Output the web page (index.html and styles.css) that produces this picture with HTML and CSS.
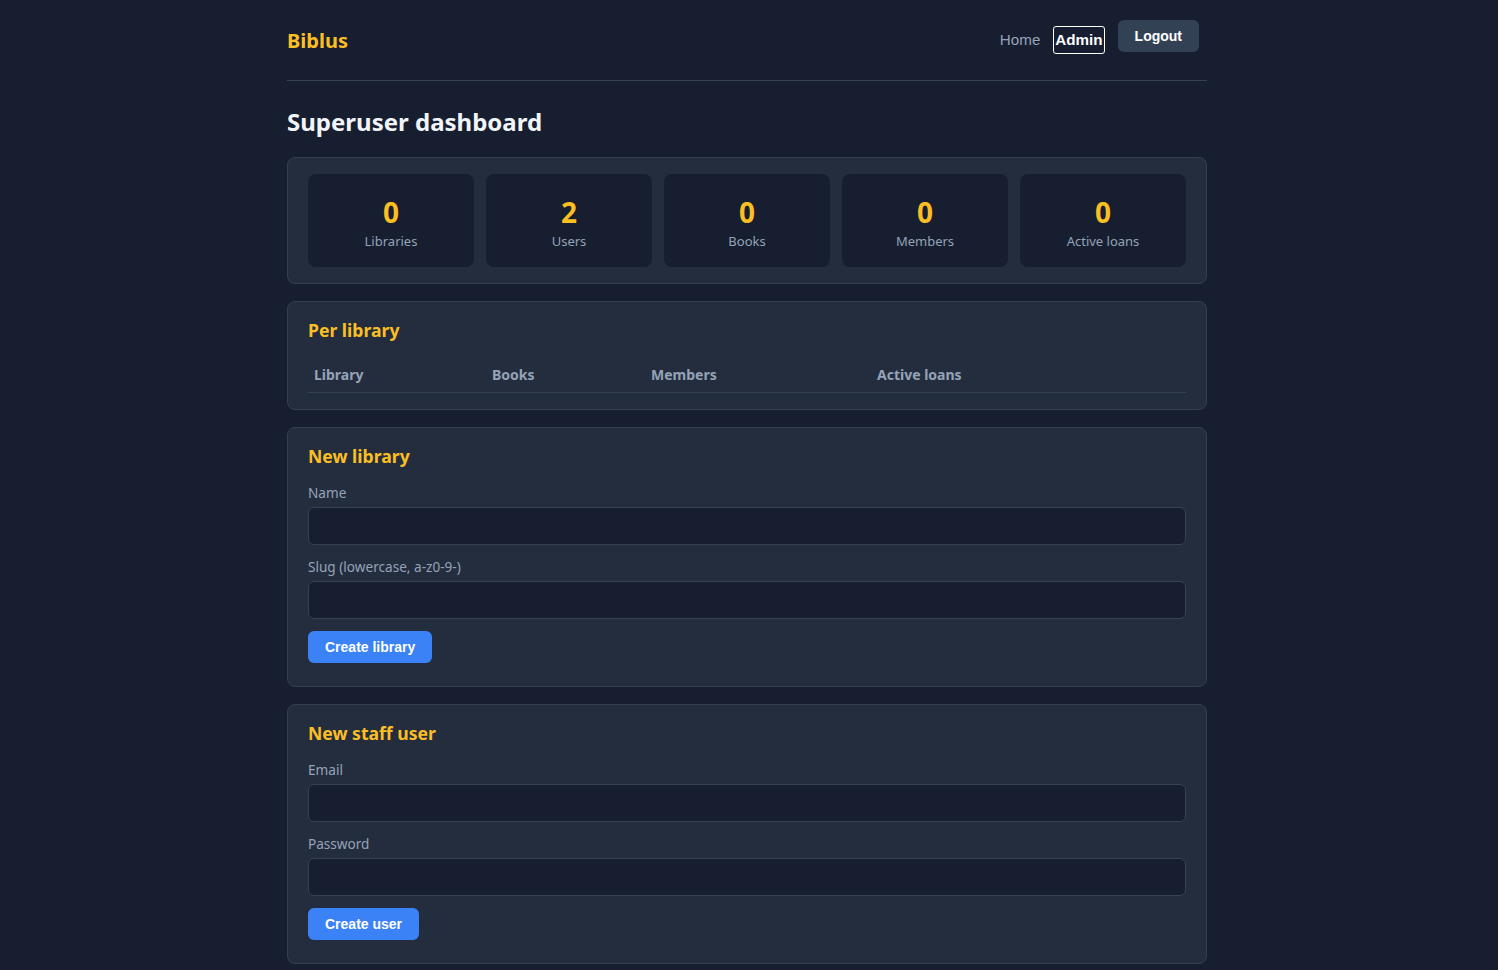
FILE: index.html
```html
<!DOCTYPE html>
<html lang="en">
<head>
<meta charset="utf-8">
<title>Biblus – Superuser dashboard</title>
<link rel="stylesheet" href="styles.css">
</head>
<body>
<div class="container">
  <header class="topbar">
    <a class="brand" href="#">Biblus</a>
    <nav class="nav">
      <a class="nav-link" href="#">Home</a>
      <a class="nav-link active" href="#">Admin</a>
      <button class="btn btn-muted logout" type="button">Logout</button>
    </nav>
  </header>

  <h1 class="page-title">Superuser dashboard</h1>

  <section class="card stats">
    <div class="stat"><div class="stat-num">0</div><div class="stat-label">Libraries</div></div>
    <div class="stat"><div class="stat-num">2</div><div class="stat-label">Users</div></div>
    <div class="stat"><div class="stat-num">0</div><div class="stat-label">Books</div></div>
    <div class="stat"><div class="stat-num">0</div><div class="stat-label">Members</div></div>
    <div class="stat"><div class="stat-num">0</div><div class="stat-label">Active loans</div></div>
  </section>

  <section class="card">
    <h2 class="card-title">Per library</h2>
    <table class="table">
      <thead>
        <tr>
          <th class="col-lib">Library</th>
          <th class="col-books">Books</th>
          <th class="col-members">Members</th>
          <th class="col-loans">Active loans</th>
        </tr>
      </thead>
      <tbody></tbody>
    </table>
  </section>

  <section class="card form-card">
    <h2 class="card-title">New library</h2>
    <form class="form">
      <div class="field">
        <label class="label" for="lib-name">Name</label>
        <input class="input" id="lib-name" type="text">
      </div>
      <div class="field">
        <label class="label" for="lib-slug">Slug (lowercase, a-z0-9-)</label>
        <input class="input" id="lib-slug" type="text">
      </div>
      <button class="btn btn-primary" type="button">Create library</button>
    </form>
  </section>

  <section class="card form-card">
    <h2 class="card-title">New staff user</h2>
    <form class="form">
      <div class="field">
        <label class="label" for="user-email">Email</label>
        <input class="input" id="user-email" type="email">
      </div>
      <div class="field">
        <label class="label" for="user-pass">Password</label>
        <input class="input" id="user-pass" type="password">
      </div>
      <button class="btn btn-primary" type="button">Create user</button>
    </form>
  </section>
</div>
</body>
</html>
```

FILE: styles.css
```css
* { box-sizing: border-box; }

html, body {
  margin: 0;
  background: #171e2f;
}

body {
  font-family: "Noto Sans", "Open Sans", sans-serif;
  color: #e2e8f0;
  padding-right: 4px;
}

.container {
  width: 920px;
  margin: 0 auto;
  padding-bottom: 24px;
}

.topbar {
  height: 81px;
  display: flex;
  align-items: center;
  justify-content: space-between;
  border-bottom: 1px solid #334155;
}

.brand {
  color: #fbbf24;
  font-weight: 700;
  font-size: 20px;
  text-decoration: none;
}

.nav {
  display: flex;
  align-items: center;
  gap: 13px;
}

.nav-link {
  font-family: "Liberation Sans", Arial, sans-serif;
  font-size: 15.2px;
  color: #94a3b8;
  text-decoration: none;
  line-height: 26px;
}

.nav-link.active {
  color: #ffffff;
  font-weight: 700;
  padding: 0 1px;
  border: 1px solid #ffffff;
  border-radius: 3px;
}

.btn {
  font-family: "Liberation Sans", Arial, sans-serif;
  font-weight: 700;
  font-size: 14px;
  color: #ffffff;
  border: 0;
  border-radius: 6px;
  height: 32px;
  padding: 0 17px;
  cursor: pointer;
}

.btn-muted { background: #334155; }

.btn-primary { background: #3b82f6; }

.logout {
  margin-right: 8px;
  margin-bottom: 8px;
}

.page-title {
  font-size: 24px;
  font-weight: 700;
  line-height: 32px;
  margin: 25px 0 19px;
  color: #f1f5f9;
}

.card {
  background: #242d3e;
  border: 1px solid #343f52;
  border-radius: 8px;
  padding: 16px 20px;
  margin-bottom: 17px;
}

.stats {
  display: grid;
  grid-template-columns: repeat(5, 1fr);
  gap: 12px;
}

.stat {
  background: #171e2f;
  border-radius: 8px;
  padding: 18px 12px 17px;
  text-align: center;
}

.stat-num {
  color: #fbbf24;
  font-size: 28px;
  font-weight: 700;
  line-height: 40px;
}

.stat-label {
  color: #94a3b8;
  font-size: 13px;
  line-height: 18px;
}

.card-title {
  color: #fbbf24;
  font-size: 17.6px;
  font-weight: 700;
  line-height: 24px;
  margin: 0 0 15px;
}

.table {
  width: 100%;
  border-collapse: collapse;
  margin-top: 1px;
}

.table th {
  text-align: left;
  color: #94a3b8;
  font-size: 14px;
  font-weight: 700;
  line-height: 20px;
  padding: 8px 6px 7px;
  border-bottom: 1px solid #334155;
}

.col-lib { width: 178px; }
.col-books { width: 159px; }
.col-members { width: 226px; }

.form-card { padding-bottom: 23px; }

.form { margin: 0; }

.field { margin-bottom: 12px; }

.label {
  display: block;
  color: #94a3b8;
  font-size: 13.6px;
  line-height: 20px;
  margin-bottom: 4px;
}

.input {
  display: block;
  width: 100%;
  height: 38px;
  background: #171e2f;
  border: 1px solid #364153;
  border-radius: 6px;
  color: #e2e8f0;
  font: inherit;
  padding: 0 10px;
}
```
